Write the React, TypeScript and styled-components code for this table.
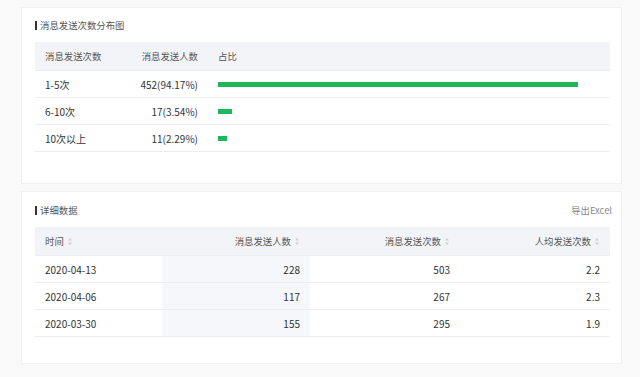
import { createGlobalStyle } from 'styled-components';
import styled from 'styled-components';

const distribution = [
  { label: '1-5次', count: 452, pct: 94.17 },
  { label: '6-10次', count: 17, pct: 3.54 },
  { label: '10次以上', count: 11, pct: 2.29 },
];

const details = [
  { date: '2020-04-13', users: 228, sends: 503, avg: '2.2' },
  { date: '2020-04-06', users: 117, sends: 267, avg: '2.3' },
  { date: '2020-03-30', users: 155, sends: 295, avg: '1.9' },
];

const SortIcon = () => (
  <SortSvg width="6" height="9" viewBox="0 0 6 9">
    <path d="M3 1 L5 3.5 H1 Z" fill="#cdd0d6" />
    <path d="M3 8 L5 5.5 H1 Z" fill="#cdd0d6" />
  </SortSvg>
);

const App = () => {
  return (
    <Page>
      <GlobalStyle />
      <Card $top={12} $bottom={32}>
        <CardHeader>
          <Title>消息发送次数分布图</Title>
        </CardHeader>
        <Table>
          <colgroup>
            <col style={{ width: 80 }} />
            <col style={{ width: 93 }} />
            <col />
          </colgroup>
          <thead>
            <tr>
              <Th>消息发送次数</Th>
              <Th $align="right">消息发送人数</Th>
              <Th>占比</Th>
            </tr>
          </thead>
          <tbody>
            {distribution.map((row) => (
              <tr key={row.label}>
                <Td>{row.label}</Td>
                <Td $align="right">
                  {row.count}({row.pct.toFixed(2)}%)
                </Td>
                <Td>
                  <Bar style={{ width: `${row.pct}%` }} />
                </Td>
              </tr>
            ))}
          </tbody>
        </Table>
      </Card>

      <Card $top={13} $bottom={27}>
        <CardHeader>
          <Title>详细数据</Title>
          <ExportLink>导出Excel</ExportLink>
        </CardHeader>
        <Table>
          <colgroup>
            <col style={{ width: 127 }} />
            <col style={{ width: 148 }} />
            <col style={{ width: 150 }} />
            <col style={{ width: 150 }} />
          </colgroup>
          <thead>
            <tr>
              <Th>
                时间 <SortIcon />
              </Th>
              <Th $align="right">
                消息发送人数 <SortIcon />
              </Th>
              <Th $align="right">
                消息发送次数 <SortIcon />
              </Th>
              <Th $align="right">
                人均发送次数 <SortIcon />
              </Th>
            </tr>
          </thead>
          <tbody>
            {details.map((row) => (
              <tr key={row.date}>
                <Td>{row.date}</Td>
                <Td $align="right" $sorted>
                  {row.users}
                </Td>
                <Td $align="right">{row.sends}</Td>
                <Td $align="right">{row.avg}</Td>
              </tr>
            ))}
          </tbody>
        </Table>
      </Card>
    </Page>
  );
};

const GlobalStyle = createGlobalStyle`
  html, body {
    margin: 0;
    padding: 0;
    background: #f9f9fa;
    font-family: "Noto Sans CJK SC", "Noto Sans", sans-serif;
  }
`;

const Page = styled.div`
  display: flex;
  flex-direction: column;
  gap: 7px;
  padding: 7px 18px 15px 21px;
`;

const Card = styled.div<{ $top: number; $bottom: number }>`
  background: #ffffff;
  border: 1px solid #f1f1f3;
  padding: ${(p) => p.$top - 1}px 11px ${(p) => p.$bottom - 1}px 13px;
`;

const CardHeader = styled.div`
  display: flex;
  justify-content: space-between;
  align-items: center;
  height: 12px;
  margin-bottom: 11px;
`;

const Title = styled.div`
  display: flex;
  align-items: center;
  font-size: 9.4px;
  color: #555;
  line-height: 12px;

  &::before {
    content: '';
    width: 2px;
    height: 9px;
    background: #333;
    margin-right: 3px;
  }
`;

const ExportLink = styled.span`
  font-size: 9.4px;
  color: #8a8a8a;
  line-height: 12px;
  margin-right: -2px;
`;

const Table = styled.table`
  width: 100%;
  border-collapse: collapse;
  table-layout: fixed;
`;

const Th = styled.th<{ $align?: 'left' | 'right' }>`
  height: 28px;
  padding: 0 10px;
  background: #f3f4f8;
  border-bottom: 1px solid #ebedf2;
  text-align: ${(p) => p.$align || 'left'};
  font-weight: normal;
  font-size: 9.4px;
  color: #555;
  white-space: nowrap;
`;

const Td = styled.td<{ $align?: 'left' | 'right'; $sorted?: boolean }>`
  height: 26px;
  padding: 0 10px;
  border-bottom: 1px solid #ededed;
  text-align: ${(p) => p.$align || 'left'};
  background: ${(p) => (p.$sorted ? '#f6f7fa' : 'transparent')};
  font-size: 10px;
  color: #333;
  white-space: nowrap;
`;

const Bar = styled.div`
  height: 5px;
  background: #20b65c;
`;

const SortSvg = styled.svg`
  vertical-align: -1px;
  margin-left: 1px;
`;

export default App;
